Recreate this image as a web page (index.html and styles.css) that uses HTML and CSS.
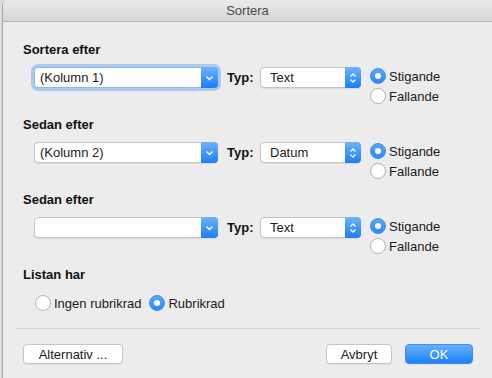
FILE: index.html
```html
<!DOCTYPE html>
<html lang="sv">
<head>
    <meta charset="UTF-8">
    <meta name="viewport" content="width=device-width, initial-scale=1.0">
    <title>Sortera</title>
    <link rel="stylesheet" href="styles.css">
</head>
<body>
    <div class="window">
        <div class="titlebar">Sortera</div>

        <div class="content">
            <!-- första sorteringsnyckeln -->
            <div class="section">
                <h3>Sortera efter</h3>
                <div class="row">
                    <div class="combo focused">
                        <span class="combo-text">(Kolumn 1)</span>
                        <span class="combo-arrow">
                            <svg width="9" height="6" viewBox="0 0 9 6"><path d="M1.5 1.5 L4.5 4.5 L7.5 1.5" fill="none" stroke="#fff" stroke-width="1.4"/></svg>
                        </span>
                    </div>
                    <span class="typ">Typ:</span>
                    <div class="popup">
                        <span class="combo-text">Text</span>
                        <span class="popup-arrow">
                            <svg width="8" height="12" viewBox="0 0 8 12"><path d="M1.5 4.5 L4 2 L6.5 4.5 M1.5 7.5 L4 10 L6.5 7.5" fill="none" stroke="#fff" stroke-width="1.3"/></svg>
                        </span>
                    </div>
                    <div class="radios">
                        <label class="radio"><span class="dot checked"></span>Stigande</label>
                        <label class="radio"><span class="dot"></span>Fallande</label>
                    </div>
                </div>
            </div>

            <div class="section">
                <h3>Sedan efter</h3>
                <div class="row">
                    <div class="combo">
                        <span class="combo-text">(Kolumn 2)</span>
                        <span class="combo-arrow">
                            <svg width="9" height="6" viewBox="0 0 9 6"><path d="M1.5 1.5 L4.5 4.5 L7.5 1.5" fill="none" stroke="#fff" stroke-width="1.4"/></svg>
                        </span>
                    </div>
                    <span class="typ">Typ:</span>
                    <div class="popup">
                        <span class="combo-text">Datum</span>
                        <span class="popup-arrow">
                            <svg width="8" height="12" viewBox="0 0 8 12"><path d="M1.5 4.5 L4 2 L6.5 4.5 M1.5 7.5 L4 10 L6.5 7.5" fill="none" stroke="#fff" stroke-width="1.3"/></svg>
                        </span>
                    </div>
                    <div class="radios">
                        <label class="radio"><span class="dot checked"></span>Stigande</label>
                        <label class="radio"><span class="dot"></span>Fallande</label>
                    </div>
                </div>
            </div>

            <div class="section">
                <h3>Sedan efter</h3>
                <div class="row">
                    <div class="combo">
                        <span class="combo-text"></span>
                        <span class="combo-arrow">
                            <svg width="9" height="6" viewBox="0 0 9 6"><path d="M1.5 1.5 L4.5 4.5 L7.5 1.5" fill="none" stroke="#fff" stroke-width="1.4"/></svg>
                        </span>
                    </div>
                    <span class="typ">Typ:</span>
                    <div class="popup">
                        <span class="combo-text">Text</span>
                        <span class="popup-arrow">
                            <svg width="8" height="12" viewBox="0 0 8 12"><path d="M1.5 4.5 L4 2 L6.5 4.5 M1.5 7.5 L4 10 L6.5 7.5" fill="none" stroke="#fff" stroke-width="1.3"/></svg>
                        </span>
                    </div>
                    <div class="radios">
                        <label class="radio"><span class="dot checked"></span>Stigande</label>
                        <label class="radio"><span class="dot"></span>Fallande</label>
                    </div>
                </div>
            </div>

            <div class="section last">
                <h3>Listan har</h3>
                <div class="row-inline">
                    <label class="radio"><span class="dot"></span>Ingen rubrikrad</label>
                    <label class="radio"><span class="dot checked"></span>Rubrikrad</label>
                </div>
            </div>
        </div>

        <div class="footer">
            <div class="buttons">
                <button class="btn btn-alt">Alternativ ...</button>
                <div class="spacer"></div>
                <button class="btn btn-cancel">Avbryt</button>
                <button class="btn btn-ok">OK</button>
            </div>
        </div>
    </div>
</body>
</html>
```

FILE: styles.css
```css
*{
    margin: 0px;
    padding: 0px;
    box-sizing: border-box;
}
html,
body{
    width: 492px;
    height: 378px;
    overflow: hidden;
    background-color: #dedede;
}
body{
    font-family: "Liberation Sans", Arial, sans-serif;
    font-size: 13px;
    color: #1a1a1a;
}
.window{
    height: 378px;
    margin-left: 2px;
    background-color: #ececec;
    border-left: 1px solid #a6a6a6;
    border-top-left-radius: 5px;
    overflow: hidden;
}
.titlebar{
    height: 22px;
    line-height: 21px;
    text-align: center;
    color: #4a4a4a;
    background: linear-gradient(#ebebeb, #d5d5d5);
    border-bottom: 1px solid #b4b4b4;
}
.content{
    padding: 20px 0 0 20px;
}
.section{
    margin-bottom: 11px;
}
.section h3{
    height: 16px;
    line-height: 16px;
    font-size: 13px;
    font-weight: bold;
    color: #111;
}
.row{
    display: flex;
    align-items: flex-start;
    margin-top: 8px;
    padding-left: 11px;
}
.combo,
.popup{
    display: flex;
    height: 21px;
    margin-top: 1px;
    background-color: #fff;
    border: 1px solid #c4c4c4;
    border-radius: 4px;
    box-shadow: 0 1px 1px rgba(0, 0, 0, .08);
}
.combo{
    width: 184px;
}
.combo.focused{
    box-shadow: 0 0 0 3px #a9c9f2;
    border-color: #8fb7ea;
}
.combo-text{
    flex: 1;
    line-height: 19px;
    padding-left: 5px;
    white-space: nowrap;
}
.popup .combo-text{
    padding-left: 9px;
}
.combo-arrow,
.popup-arrow{
    display: flex;
    align-items: center;
    justify-content: center;
    width: 17px;
    margin: -1px -1px -1px 0;
    background: linear-gradient(#6db3fb, #1b7ff6);
    border-top-right-radius: 4px;
    border-bottom-right-radius: 4px;
}
.popup-arrow{
    width: 16px;
}
.typ{
    width: 33px;
    margin-left: 9px;
    line-height: 23px;
    font-weight: bold;
    color: #111;
}
.popup{
    width: 101px;
}
.radios{
    display: flex;
    flex-direction: column;
    margin-left: 9px;
}
.radio{
    display: flex;
    align-items: center;
    height: 20px;
    white-space: nowrap;
}
.dot{
    position: relative;
    width: 16px;
    height: 16px;
    margin-right: 3px;
    background-color: #fff;
    border: 1px solid #b3b3b3;
    border-radius: 50%;
}
.dot.checked{
    background: linear-gradient(#58a7fb, #2b89f8);
    border-color: #3a8ef5;
}
.dot.checked::after{
    content: "";
    position: absolute;
    top: 4px;
    left: 4px;
    width: 6px;
    height: 6px;
    background-color: #fff;
    border-radius: 50%;
}
.section.last h3{
    margin-bottom: 10px;
}
.row-inline{
    display: flex;
    gap: 8px;
    padding-left: 12px;
}
.footer{
    margin-top: 4px;
    padding: 0 12px;
}
.buttons{
    display: flex;
    margin-top: 15px;
    padding: 0 7px 0 8px;
    border-top: 1px solid #d4d4d4;
    padding-top: 15px;
}
.spacer{
    flex: 1;
}
.btn{
    height: 20px;
    font-family: inherit;
    font-size: 13px;
    color: #1a1a1a;
    background-color: #fff;
    border: 1px solid #c6c6c6;
    border-radius: 4px;
    box-shadow: 0 1px 1px rgba(0, 0, 0, .06);
}
.btn-alt{
    width: 100px;
}
.btn-cancel{
    width: 66px;
    margin-right: 13px;
}
.btn-ok{
    width: 68px;
    color: #fff;
    background: linear-gradient(#69b1fb, #1a80f7);
    border-color: #3d8ef0;
}
```
